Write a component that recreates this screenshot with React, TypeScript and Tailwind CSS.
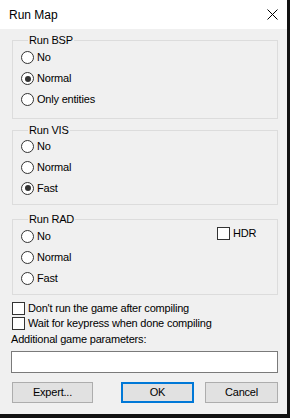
import React from "react";

const font = { fontFamily: '"Liberation Sans", Arial, sans-serif' };

function Radio({ label, checked }: { label: string; checked?: boolean }) {
  return (
    <div className="flex h-[21px] items-center">
      <span className="flex h-[13px] w-[13px] items-center justify-center rounded-full border border-[#333333] bg-white">
        {checked && <span className="h-[6px] w-[6px] rounded-full bg-[#333333]" />}
      </span>
      <span className="ml-[3px]">{label}</span>
    </div>
  );
}

function Check({ label }: { label: string }) {
  return (
    <div className="flex items-center">
      <span className="h-[13px] w-[13px] border border-[#333333] bg-white" />
      <span className="ml-[3px]">{label}</span>
    </div>
  );
}

function Group({
  title,
  className,
  children,
}: {
  title: string;
  className?: string;
  children: React.ReactNode;
}) {
  return (
    <fieldset className={`shrink-0 border border-[#dcdcdc] pl-[8px] ${className ?? ""}`}>
      <legend className="ml-[7px] px-[1px] leading-[13px]">{title}</legend>
      {children}
    </fieldset>
  );
}

export default function App() {
  return (
    <div className="h-[418px] w-[290px] bg-[#111111]">
      <div
        className="flex h-[414px] w-[287px] flex-col bg-[#f0f0f0] text-[11px] tracking-[-0.2px] text-black"
        style={font}
      >
        {/* Title bar */}
        <div className="flex h-[29px] shrink-0 items-center justify-between bg-white pl-[9px] pr-[9px]">
          <span className="text-[12px] tracking-normal">Run Map</span>
          <svg width="11" height="11" viewBox="0 0 11 11">
            <path d="M0.5 0.5L10.5 10.5M10.5 0.5L0.5 10.5" stroke="#000" strokeWidth="1" />
          </svg>
        </div>

        <div className="flex flex-col pl-[12px] pr-[9px]">
          <Group title="Run BSP" className="mt-[4.5px] h-[85px]">
            <div className="pt-[0.5px]">
              <Radio label="No" />
              <Radio label="Normal" checked />
              <Radio label="Only entities" />
            </div>
          </Group>

          <Group title="Run VIS" className="mt-[5px] h-[81px]">
            <div className="-mt-[1px]">
              <Radio label="No" />
              <Radio label="Normal" />
              <Radio label="Fast" checked />
            </div>
          </Group>

          <Group title="Run RAD" className="mt-[8.5px] h-[82px]">
            <div>
              <div className="flex">
                <div className="w-[196px]">
                  <Radio label="No" />
                </div>
                <div className="-mt-[3px] flex h-[21px] items-center">
                  <Check label="HDR" />
                </div>
              </div>
              <Radio label="Normal" />
              <Radio label="Fast" />
            </div>
          </Group>

          <div className="mt-[6px] flex flex-col">
            <div className="flex h-[15px] items-center">
              <Check label="Don't run the game after compiling" />
            </div>
            <div className="flex h-[15px] items-center">
              <Check label="Wait for keypress when done compiling" />
            </div>
          </div>

          <div className="-ml-[1px] mt-[1px] flex h-[15px] items-center">
            Additional game parameters:
          </div>
          <div className="-ml-[1px] mt-[4px] h-[22px] border border-[#7a7a7a] bg-white" />

          <div className="mt-[9px] flex">
            <button className="h-[21px] w-[81px] border border-[#adadad] bg-[#e1e1e1]">
              Expert...
            </button>
            <button className="ml-[28px] h-[21px] w-[73px] border-2 border-[#0078d7] bg-[#e1e1e1]">
              OK
            </button>
            <button className="ml-[11px] h-[21px] w-[73px] border border-[#adadad] bg-[#e1e1e1]">
              Cancel
            </button>
          </div>
        </div>
      </div>
    </div>
  );
}
